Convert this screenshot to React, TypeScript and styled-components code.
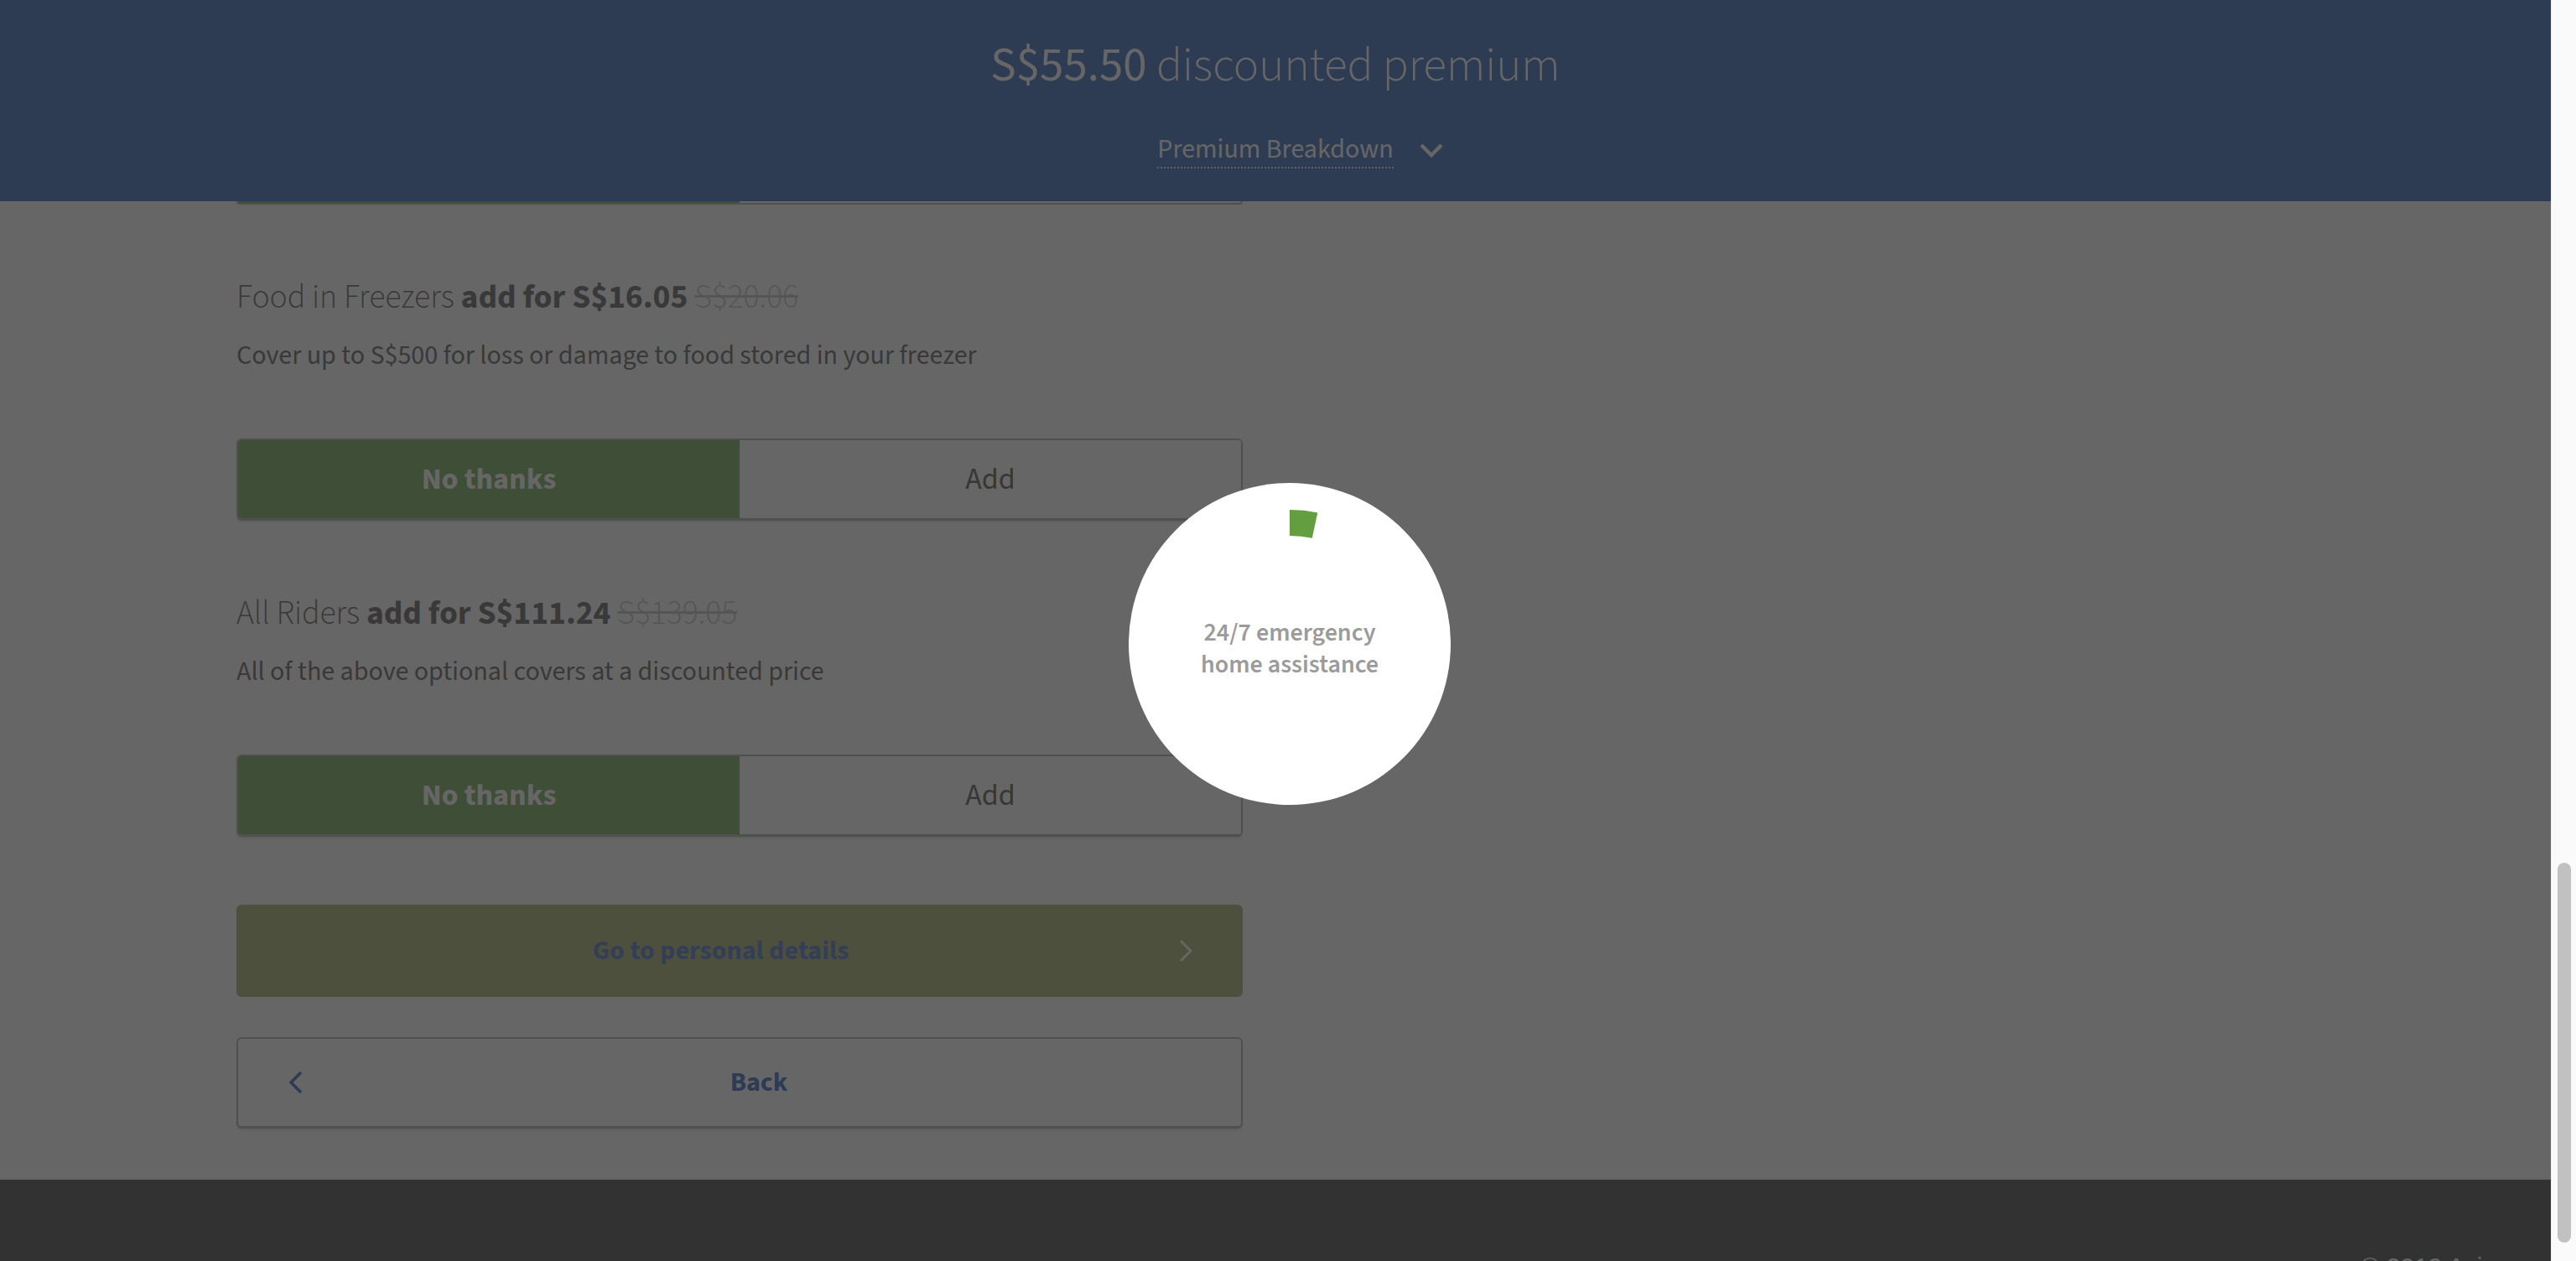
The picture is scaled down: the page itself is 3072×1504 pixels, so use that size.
import React from "react"
import styled, { createGlobalStyle } from "styled-components"

const GlobalStyle = createGlobalStyle`
  html, body {
    margin: 0;
    padding: 0;
    height: 100%;
    overflow: hidden;
  }
  body {
    font-family: "Source Sans Pro", "Source Sans 3", Lato, "Noto Sans", sans-serif;
    background: #fff;
  }
  * {
    box-sizing: border-box;
  }
`

const Screen = styled.div`
  display: flex;
  height: 1504px;
  overflow: hidden;
`

const Page = styled.div`
  flex: 1;
  min-width: 0;
  display: flex;
  flex-direction: column;
`

const Header = styled.header`
  flex-shrink: 0;
  height: 240px;
  padding-top: 44px;
  background: #1f53b2;
  color: #fff;
  display: flex;
  flex-direction: column;
  align-items: center;
`

const Total = styled.h1`
  margin: 0;
  font-size: 57px;
  line-height: 70px;
  font-weight: 300;
`

const Amount = styled.span`
  font-weight: 400;
`

const BreakdownRow = styled.div`
  margin-top: 43px;
  padding-left: 59px;
  display: flex;
  align-items: center;
  gap: 31px;
`

const BreakdownLink = styled.span`
  font-size: 32px;
  line-height: 42px;
  border-bottom: 2px dotted rgba(255, 255, 255, 0.85);
`

const Main = styled.main`
  flex-shrink: 0;
  padding: 0 0 61px 282px;
`

const Column = styled.div`
  width: 1200px;
  display: flex;
  flex-direction: column;
`

const ToggleTail = styled.div`
  height: 4px;
  border: 2px solid #a8a8a8;
  border-top: 0;
  border-radius: 0 0 6px 6px;
  overflow: hidden;
  display: flex;
`

const TailFill = styled.div`
  width: 598px;
  background: #65a142;
`

const Rider = styled.section`
  margin-top: 87px;
`

const RiderTitle = styled.h3`
  margin: 0;
  font-size: 39.5px;
  line-height: 48px;
  font-weight: 300;
  color: #4c4c4c;
`

const Price = styled.strong`
  font-weight: 700;
`

const WasPrice = styled.s`
  color: #bbb;
`

const RiderText = styled.p`
  margin: 27px 0 0;
  font-size: 32px;
  line-height: 36px;
  color: #4c4c4c;
`

const Toggle = styled.div`
  margin-top: 81px;
  height: 98px;
  display: flex;
  border: 2px solid #a8a8a8;
  border-bottom-width: 3px;
  border-radius: 6px;
  overflow: hidden;
  box-shadow: 0 2px 2px rgba(0, 0, 0, 0.12);
`

const ToggleOption = styled.button<{ $active?: boolean }>`
  flex: 1;
  margin: 0;
  border: 0;
  font-family: inherit;
  font-size: 36px;
  font-weight: ${(p) => (p.$active ? 700 : 400)};
  color: ${(p) => (p.$active ? "#fff" : "#444")};
  background: ${(p) => (p.$active ? "#65a142" : "#fff")};
`

const ContinueButton = styled.button`
  margin-top: 81px;
  height: 110px;
  padding: 0 60px 0 32px;
  display: flex;
  align-items: center;
  border: 0;
  border-radius: 6px;
  background: #9ba757;
  font-family: inherit;
  font-size: 32px;
  font-weight: 700;
  color: #3a63c0;
`

const BackButton = styled.button`
  margin-top: 48px;
  height: 109px;
  padding: 0 32px 0 61px;
  display: flex;
  align-items: center;
  border: 2px solid #a8a8a8;
  border-bottom-width: 3px;
  border-radius: 6px;
  background: #fff;
  box-shadow: 0 2px 2px rgba(0, 0, 0, 0.12);
  font-family: inherit;
  font-size: 32px;
  font-weight: 700;
  color: #1f53b7;
`

const ButtonLabel = styled.span`
  flex: 1;
  text-align: center;
`

const Footer = styled.footer`
  flex: 1;
  background: #333;
  display: flex;
  justify-content: flex-end;
  padding: 86px 50px 0 0;
`

const Copyright = styled.span`
  font-family: "Liberation Sans", Arial, sans-serif;
  font-size: 30px;
  line-height: 36px;
  color: #fff;
`

const ScrollTrack = styled.div`
  position: relative;
  z-index: 20;
  width: 30px;
  flex-shrink: 0;
  background: #fafafa;
  border-left: 1px solid #ececec;
  padding-top: 1029px;
  display: flex;
  justify-content: center;
`

const ScrollThumb = styled.div`
  width: 16px;
  height: 453px;
  border-radius: 8px;
  background: #c1c1c1;
`

const Overlay = styled.div`
  position: fixed;
  inset: 0;
  z-index: 10;
  background: rgba(51, 51, 51, 0.75);
  display: flex;
  align-items: center;
  justify-content: center;
  padding: 32px 0 0 4px;
`

const Loader = styled.div`
  position: relative;
  width: 384px;
  height: 384px;
  border-radius: 50%;
  background: #fff;
  display: flex;
  align-items: center;
  justify-content: center;
  padding-top: 12px;
`

const LoaderRing = styled.svg`
  position: absolute;
  inset: 0;
`

const LoaderText = styled.p`
  margin: 0;
  font-size: 30px;
  line-height: 38px;
  font-weight: 600;
  color: #9b9b9b;
  text-align: center;
`

interface RiderOption {
  name: string
  price: string
  was: string
  text: string
}

const riders: RiderOption[] = [
  {
    name: "Food in Freezers",
    price: "S$16.05",
    was: "S$20.06",
    text: "Cover up to S$500 for loss or damage to food stored in your freezer",
  },
  {
    name: "All Riders",
    price: "S$111.24",
    was: "S$139.05",
    text: "All of the above optional covers at a discounted price",
  },
]

const ChevronDown = () => (
  <svg width="28" height="18" viewBox="0 0 28 18" fill="none">
    <path d="M2 3 L14 15 L26 3" stroke="#fff" strokeWidth="4.5" />
  </svg>
)

const ChevronRight = () => (
  <svg width="17" height="28" viewBox="0 0 17 28" fill="none">
    <path d="M3 2 L15 14 L3 26" stroke="#fff" strokeWidth="3" />
  </svg>
)

const ChevronLeft = () => (
  <svg width="17" height="28" viewBox="0 0 17 28" fill="none">
    <path d="M14 2 L2 14 L14 26" stroke="#1f53b7" strokeWidth="3.5" />
  </svg>
)

const App: React.FC = () => {
  return (
    <>
      <GlobalStyle />
      <Screen>
        <Page>
          <Header>
            <Total>
              <Amount>S$55.50</Amount> discounted premium
            </Total>
            <BreakdownRow>
              <BreakdownLink>Premium Breakdown</BreakdownLink>
              <ChevronDown />
            </BreakdownRow>
          </Header>
          <Main>
            <Column>
              <ToggleTail>
                <TailFill />
              </ToggleTail>
              {riders.map((r) => (
                <Rider key={r.name}>
                  <RiderTitle>
                    {r.name} <Price>add for {r.price}</Price> <WasPrice>{r.was}</WasPrice>
                  </RiderTitle>
                  <RiderText>{r.text}</RiderText>
                  <Toggle>
                    <ToggleOption $active>No thanks</ToggleOption>
                    <ToggleOption>Add</ToggleOption>
                  </Toggle>
                </Rider>
              ))}
              <ContinueButton>
                <ButtonLabel>Go to personal details</ButtonLabel>
                <ChevronRight />
              </ContinueButton>
              <BackButton>
                <ChevronLeft />
                <ButtonLabel>Back</ButtonLabel>
              </BackButton>
            </Column>
          </Main>
          <Footer>
            <Copyright>© 2019 Aviva</Copyright>
          </Footer>
        </Page>
        <ScrollTrack>
          <ScrollThumb />
        </ScrollTrack>
      </Screen>
      <Overlay>
        <Loader>
          <LoaderRing viewBox="0 0 384 384">
            <circle
              cx="192"
              cy="192"
              r="144.5"
              fill="none"
              stroke="#639e41"
              strokeWidth="31"
              strokeDasharray="30.3 1000"
              transform="rotate(-90 192 192)"
            />
          </LoaderRing>
          <LoaderText>
            24/7 emergency
            <br />
            home assistance
          </LoaderText>
        </Loader>
      </Overlay>
    </>
  )
}

export default App
